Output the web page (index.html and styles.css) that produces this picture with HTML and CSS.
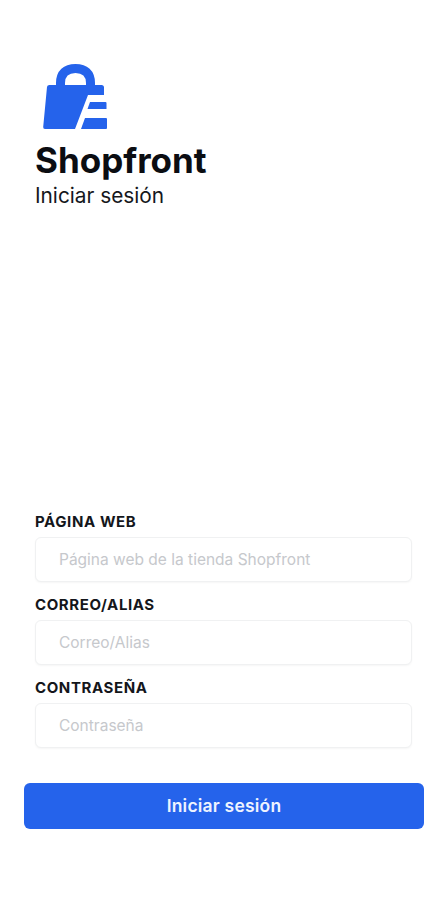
FILE: index.html
```html
<!DOCTYPE html>
<html lang="es">
<head>
<meta charset="utf-8">
<title>Shopfront</title>
<link rel="stylesheet" href="styles.css">
</head>
<body>
<main class="page">
  <header class="brand">
    <svg class="logo" viewBox="0 0 70 72" width="70" height="72" aria-hidden="true">
      <path class="logo-handle" d="M20.500 27V23C20.500 13 26 8.500 35.500 8.500C45 8.500 50.500 13 50.500 23V27"/>
      <path class="logo-fill" d="M9.500 25H61.500Q64 25 64 27.500V35H48L35 69H5Q3 69 3.200 67L7 27Q7.200 25 9.500 25Z"/>
      <path class="logo-fill" d="M50 42H65.500Q66.500 42 66.500 43V49H47.500Z"/>
      <path class="logo-fill" d="M45 58H66Q67 58 67 59V68Q67 69 66 69H41Z"/>
    </svg>
    <h1 class="title">Shopfront</h1>
    <p class="subtitle">Iniciar sesión</p>
  </header>
  <form class="form">
    <div class="fields">
      <div class="field">
        <label class="label" for="web">PÁGINA WEB</label>
        <input class="input" id="web" type="text" placeholder="Página web de la tienda Shopfront">
      </div>
      <div class="field">
        <label class="label" for="user">CORREO/ALIAS</label>
        <input class="input" id="user" type="text" placeholder="Correo/Alias">
      </div>
      <div class="field">
        <label class="label" for="pass">CONTRASEÑA</label>
        <input class="input" id="pass" type="text" placeholder="Contraseña">
      </div>
    </div>
    <button class="submit" type="button">Iniciar sesión</button>
  </form>
</main>
</body>
</html>
```
FILE: styles.css
```css
* { box-sizing: border-box; }
html, body { margin: 0; height: 100%; }
body {
  background: #fff;
  font-family: Inter, "Liberation Sans", sans-serif;
  color: #0b0d12;
}
.page {
  height: 900px;
  overflow: hidden;
  padding: 60px 22px 0 24px;
  display: flex;
  flex-direction: column;
}
.brand {
  padding-left: 11px;
  display: flex;
  flex-direction: column;
  align-items: flex-start;
}
.logo { display: block; margin-left: 5px; }
.logo-fill { fill: #2563eb; }
.logo-handle { fill: none; stroke: #2563eb; stroke-width: 9; }
.title {
  margin: 6px 0 0;
  font-size: 35px;
  line-height: 44px;
  font-weight: 700;
}
.subtitle {
  margin: 0;
  font-size: 20.800px;
  line-height: 28px;
  font-weight: 400;
  color: #15171c;
}
.form {
  margin-top: 303px;
  display: flex;
  flex-direction: column;
  gap: 35px;
}
.fields {
  display: flex;
  flex-direction: column;
  gap: 14px;
  padding: 0 12px 0 11px;
}
.field { display: flex; flex-direction: column; gap: 6px; }
.label {
  font-size: 15px;
  line-height: 18px;
  font-weight: 700;
  letter-spacing: 0.6px;
  color: #14161b;
}
.input {
  width: 100%;
  height: 45px;
  padding: 0 23px;
  border: 1.500px solid #f0f1f2;
  border-radius: 6px;
  background: #fff;
  box-shadow: 0 1px 2px rgba(0, 0, 0, 0.04);
  font-family: inherit;
  font-size: 15.500px;
  color: #111;
  outline: none;
}
.input::placeholder { color: #c6c8cc; opacity: 1; }
.submit {
  width: 400px;
  height: 46px;
  padding: 0 0 1px;
  border: 0;
  border-radius: 6px;
  background: #2563eb;
  color: #eef3ff;
  font-family: inherit;
  font-size: 17.500px;
  font-weight: 600;
  letter-spacing: 0.2px;
}
```
